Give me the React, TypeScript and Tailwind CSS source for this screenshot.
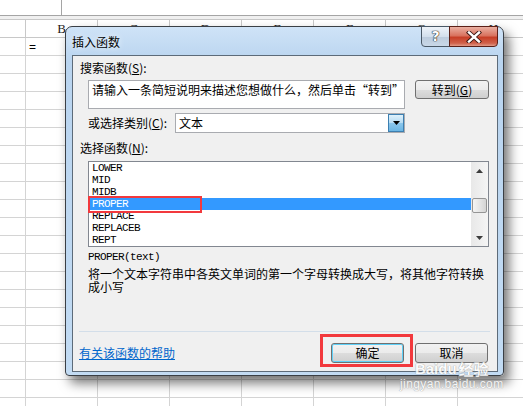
import React from 'react';

const cjk = "font-['Noto_Sans_CJK_SC',sans-serif]";
const mono = "font-['Liberation_Mono',monospace]";

const cols = ['B', 'C', 'D', 'E', 'F', 'G', 'H'];
const funcs = ['LOWER', 'MID', 'MIDB', 'PROPER', 'REPLACE', 'REPLACEB', 'REPT'];

const btn =
  'flex items-center justify-center rounded-[3px] border border-[#707070] bg-[linear-gradient(#f2f2f2_0%,#ebebeb_50%,#dddddd_50%,#cfcfcf_100%)] text-[12px] leading-none text-black';

const Sheet = () => (
  <div className="flex flex-col">
    <div className="flex h-[16px] border-b border-[#a5a5a5]">
      <div className="w-[62px] border-r border-[#a5a5a5]" />
    </div>
    <div className="h-[3px] bg-[#f0f0f0]" />
    <div className="flex h-[19px] border-y border-[#c8c8c8]">
      <div className="w-[26px] shrink-0 border-r border-[#c8c8c8]" />
      {cols.map((c) => (
        <div
          key={c}
          className="flex w-[72px] shrink-0 items-center justify-center border-r border-[#c8c8c8] font-['Liberation_Serif',serif] text-[13px] text-[#222]"
        >
          {c}
        </div>
      ))}
    </div>
    {Array.from({ length: 21 }).map((_, r) => (
      <div key={r} className="flex h-[18px] border-b border-[#d4d4d4]">
        <div className="w-[26px] shrink-0 border-r border-[#d4d4d4]" />
        {cols.map((c, i) => (
          <div
            key={c}
            className="flex w-[72px] shrink-0 items-center border-r border-[#d4d4d4] pl-[3px] font-['Liberation_Sans',sans-serif] text-[12px] text-black"
          >
            {r === 0 && i === 0 ? '=' : ''}
          </div>
        ))}
      </div>
    ))}
  </div>
);

const CaptionButtons = () => (
  <div className="-mt-px mr-[5px] flex h-[21px]">
    <div className="flex w-[29px] items-center justify-center rounded-bl-[4px] border border-[#4a5866] bg-[linear-gradient(#eef3f9_0%,#d3dfec_50%,#bccbdc_51%,#c9d8e8_100%)] font-['DejaVu_Sans',sans-serif] text-[14px] font-bold text-white [text-shadow:0_0_1px_#222,0_0_1px_#222,0_0_1px_#222]">
      ?
    </div>
    <div className="-ml-px flex w-[49px] items-center justify-center rounded-br-[4px] border border-[#5b1f17] bg-[linear-gradient(#eab0a2_0%,#d9735f_45%,#c73f27_55%,#d0604a_85%,#e29a88_100%)]">
      <svg width="18" height="12" viewBox="0 0 18 12">
        <path d="M4 1.5 L14 10.5 M14 1.5 L4 10.5" stroke="#3a1510" strokeWidth="4.2" strokeLinecap="square" />
        <path d="M4 1.5 L14 10.5 M14 1.5 L4 10.5" stroke="#ffffff" strokeWidth="2.4" strokeLinecap="square" />
      </svg>
    </div>
  </div>
);

const Dialog = () => (
  <div className="absolute left-[65px] top-[26px] flex w-[439px] flex-col rounded-t-[7px] rounded-b-[4px] border border-[#3a3f45] bg-[linear-gradient(180deg,#cfe3f7_0%,#b9d4ef_10%,#c2dbf3_100%)] shadow-[5px_7px_12px_rgba(0,0,0,0.55)]">
    <div className="flex h-[28px] items-start justify-between">
      <div className={`${cjk} mt-[7px] pl-[6px] text-[12px] leading-[16px] text-black [text-shadow:0_0_6px_#fff]`}>
        插入函数
      </div>
      <CaptionButtons />
    </div>
    <div className="flex pb-[3px] pl-[6px] pr-[5px]">
      <div className={`${cjk} relative flex h-[317px] w-[426px] flex-col border border-[#5d6b79] bg-[#f0f0f0] pl-[6px] text-[12px] text-black`}>
        <div className="ml-[1px] mt-[4px] h-[16px] leading-[16px]">
          搜索函数(<span className="underline">S</span>):
        </div>
        <div className="ml-[9px] mt-[4px] flex items-start gap-[10px]">
          <div className="h-[29px] w-[317px] whitespace-nowrap border border-[#a9abb0] bg-white px-[3px] pt-[1px] leading-[16px]">
            请输入一条简短说明来描述您想做什么，然后单击“转到”
          </div>
          <div className={`${btn} h-[19px] w-[74px]`}>
            转到(<span className="underline">G</span>)
          </div>
        </div>
        <div className="ml-[9px] mt-[4px] flex h-[20px] items-center">
          <div className="w-[87px] leading-[16px]">
            或选择类别(<span className="underline">C</span>):
          </div>
          <div className="flex h-[20px] w-[230px] items-stretch border border-[#a9abb0] bg-white">
            <div className="flex-1 pl-[3px] leading-[18px]">文本</div>
            <div className="flex w-[16px] items-center justify-center border border-[#3c7fb1] bg-[linear-gradient(#dff1fb_0%,#b6dcf3_50%,#8cc7ec_51%,#6bb6e4_100%)]">
              <svg width="7" height="4" viewBox="0 0 7 4">
                <path d="M0 0 H7 L3.5 4 Z" fill="#000" />
              </svg>
            </div>
          </div>
        </div>
        <div className="ml-[1px] mt-[7px] h-[16px] leading-[16px]">
          选择函数(<span className="underline">N</span>):
        </div>
        <div className="relative ml-[9px] mt-[5px] flex h-[86px] w-[401px] border border-[#828790] bg-white">
          <div className={`${mono} flex flex-1 flex-col text-[11px] tracking-[-0.6px]`}>
            {funcs.map((f) => (
              <div
                key={f}
                className={`h-[12px] pl-[3px] leading-[12px] ${f === 'PROPER' ? 'bg-[#3399ff] text-white' : 'text-black'}`}
              >
                {f}
              </div>
            ))}
          </div>
          <div className="flex w-[17px] flex-col bg-[linear-gradient(90deg,#e8e8e8,#f5f5f5)]">
            <div className="flex h-[17px] items-center justify-center">
              <svg width="7" height="4" viewBox="0 0 7 4">
                <path d="M0 4 H7 L3.5 0 Z" fill="#3c3c3c" />
              </svg>
            </div>
            <div className="ml-px mt-[19px] h-[15px] w-[15px] rounded-[2px] border border-[#959595] bg-[linear-gradient(90deg,#f4f4f4,#e2e2e2_60%,#d4d4d4)]" />
            <div className="flex-1" />
            <div className="flex h-[17px] items-center justify-center">
              <svg width="7" height="4" viewBox="0 0 7 4">
                <path d="M0 0 H7 L3.5 4 Z" fill="#3c3c3c" />
              </svg>
            </div>
          </div>
          <div className="absolute -left-px top-[34px] h-[17px] w-[114px] border-2 border-[#f2393d]" />
        </div>
        <div className={`${mono} ml-[9px] mt-[4px] h-[12px] text-[11px] leading-[12px] tracking-[-0.6px]`}>
          PROPER(text)
        </div>
        <div className="ml-[9px] mt-[4px] w-[400px] leading-[13px]">
          将一个文本字符串中各英文单词的第一个字母转换成大写，将其他字符转换成小写
        </div>
        <div className="mt-[38px] h-px w-[411px] bg-[#d3dee9]" />
        <div className="mt-[11px] flex h-[20px] w-[411px] items-center pr-[2px]">
          <div className="flex-1 leading-[16px] text-[#0066cc] underline">有关该函数的帮助</div>
          <div className="relative">
            <div className={`${btn} h-[20px] w-[73px] border-[#3c7fb1] shadow-[inset_0_0_0_1px_#5fd0f8]`}>确定</div>
            <div className="absolute -left-[11px] -top-[9px] h-[33px] w-[93px] border-[3px] border-[#f2393d]" />
          </div>
          <div className={`${btn} ml-[11px] h-[20px] w-[73px]`}>取消</div>
        </div>
      </div>
    </div>
  </div>
);

const Watermark = () => (
  <div className="pointer-events-none absolute left-[400px] top-[360px] flex flex-col items-center text-white opacity-85 [text-shadow:0_0_1px_#9a9a9a,0_0_1px_#9a9a9a]">
    <div className={`${cjk} flex items-center text-[15px] font-bold leading-[17px]`}>
      <span className="font-['Liberation_Sans',sans-serif]">Baidu</span>
      <span className="ml-[2px]">经验</span>
    </div>
    <div className="font-['Liberation_Sans',sans-serif] text-[12px] leading-[14px] tracking-[0.4px]">
      jingyan.baidu.com
    </div>
  </div>
);

export default function App() {
  return (
    <div className="relative h-[406px] w-[523px] overflow-hidden bg-white">
      <Sheet />
      <Dialog />
      <Watermark />
    </div>
  );
}
